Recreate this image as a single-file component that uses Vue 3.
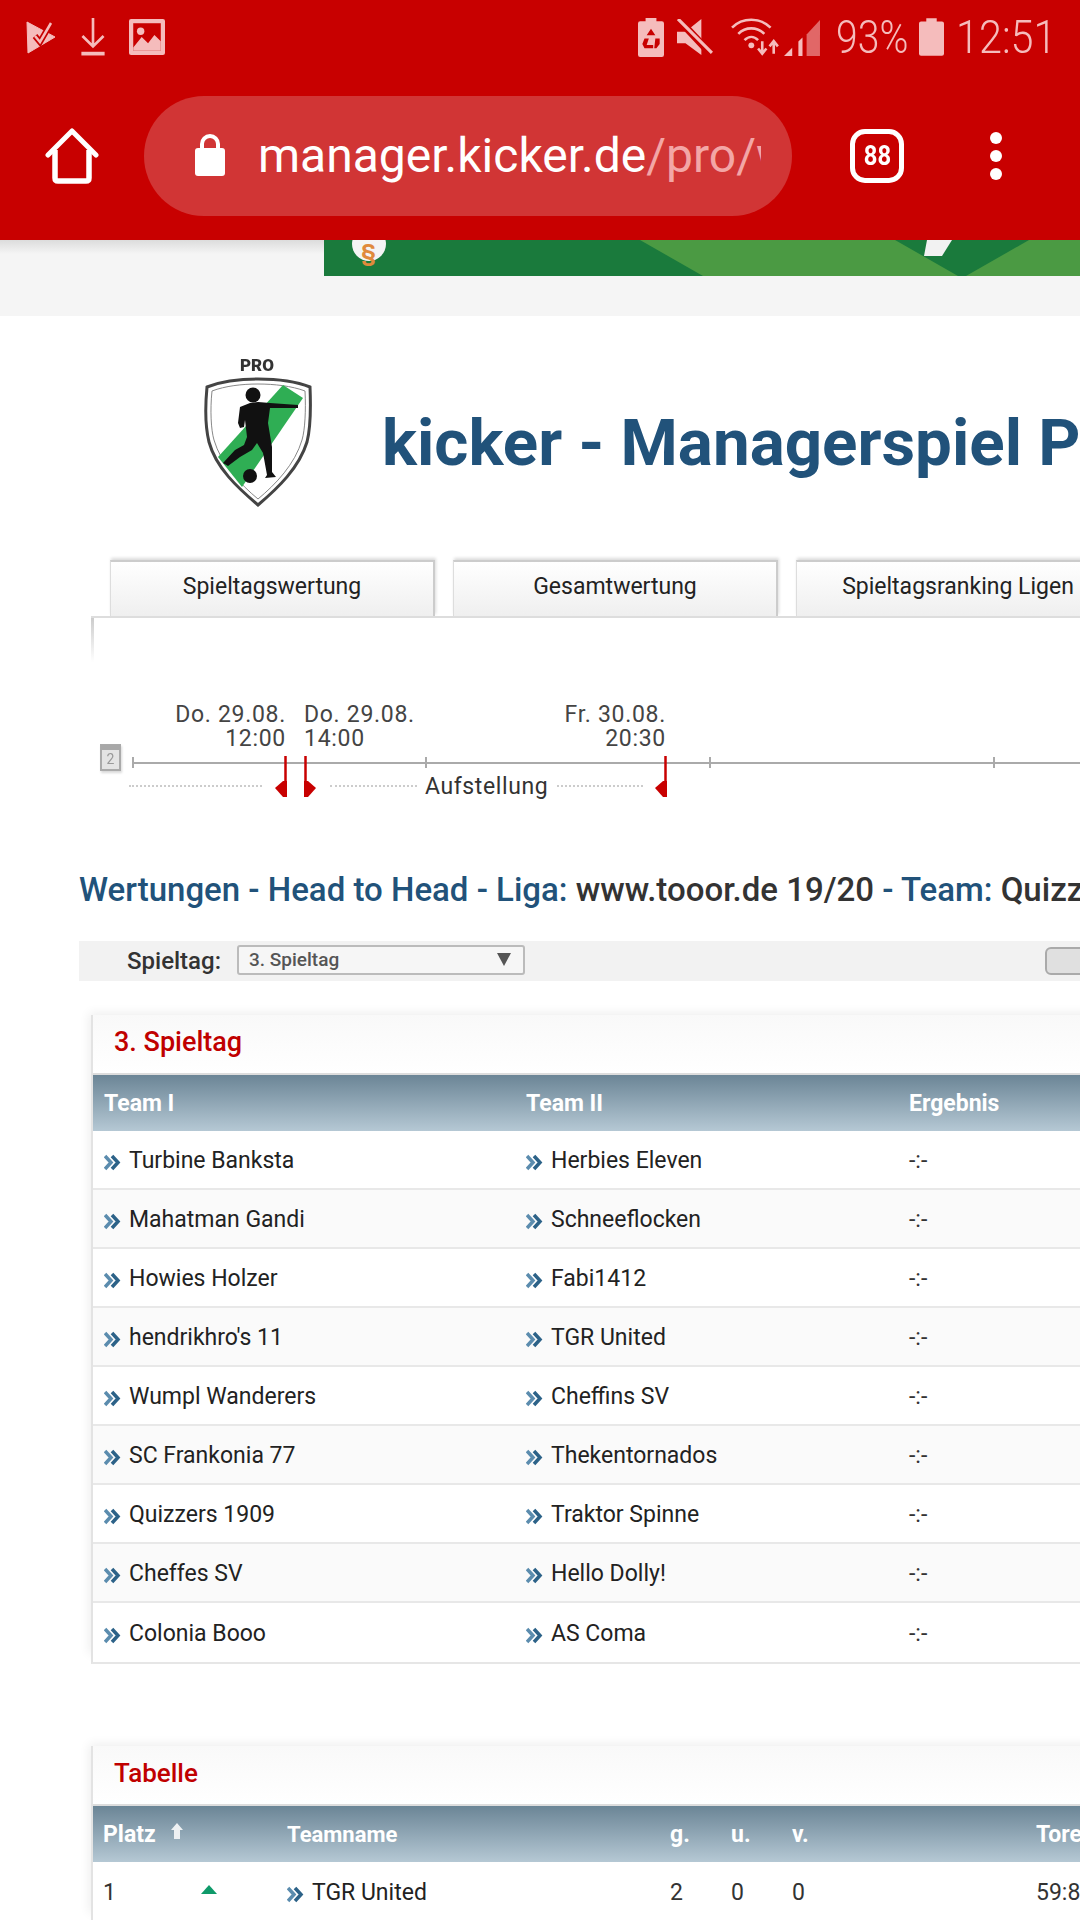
<template>
  <div class="screen">
    <header class="browser">
      <div class="status">
        <div class="status-left">
          <svg class="ic-play" width="30" height="34" viewBox="0 0 30 34">
            <path d="M1 2 L29 17 L2 33 Z" fill="#f5bcbc" stroke="#f5bcbc" stroke-linejoin="round" stroke-width="1" />
            <path d="M9 16 L14 22 L25 3" fill="none" stroke="#c80000" stroke-width="6" />
            <path d="M9 16 L14 22 L25 3" fill="none" stroke="#f5bcbc" stroke-width="2.5" />
          </svg>
          <svg class="ic-down" width="26" height="38" viewBox="0 0 24 36">
            <path d="M12 0 V27 M2 17 L12 27 L22 17" fill="none" stroke="#f5bcbc" stroke-width="2.5" />
            <rect x="1" y="32" width="22" height="3.5" fill="#f5bcbc" />
          </svg>
          <svg class="ic-image" width="36" height="36" viewBox="0 0 34 34">
            <rect width="34" height="34" rx="2" fill="#f5bcbc" />
            <rect x="4" y="4" width="26" height="26" fill="#c80000" />
            <circle cx="11" cy="11.500" r="3.500" fill="#f5bcbc" />
            <path d="M4 27 L12 17 L18 23 L24 15 L30 21 V30 H4 Z" fill="#f5bcbc" />
          </svg>
        </div>
        <div class="status-right">
          <svg class="ic-batsave" width="26" height="39" viewBox="0 0 24 36">
            <path d="M7 0 H17 V3 H22 Q24 3 24 5 V34 Q24 36 22 36 H2 Q0 36 0 34 V5 Q0 3 2 3 H7 Z" fill="#f5bcbc" />
            <path d="M12 10 L16 16 H8 Z M6 19 L10 19 L8 25 H14 V28 H6 L4 24 Z M16 19 H20 L20 24 L17 28 H15 Z" fill="#c80000" />
          </svg>
          <svg class="ic-mute" width="36" height="36" viewBox="0 0 34 34">
            <path d="M0 12 H8 L23 0 V34 L8 23 H0 Z" fill="#f5bcbc" />
            <path d="M2 1 L32 33" stroke="#c80000" stroke-width="7" />
            <path d="M1 0 L33 32" stroke="#f5bcbc" stroke-width="3" />
          </svg>
          <svg class="ic-wifi" width="50" height="38" viewBox="0 0 48 36">
            <path d="M1 9 C11 -1 28 -1 38 9 M7 15 C14 8 25 8 32 15 M13 21 C17 17 22 17 26 21" fill="none" stroke="#f5bcbc" stroke-width="2.500" />
            <circle cx="19.500" cy="26" r="2.800" fill="#f5bcbc" />
            <path d="M30 22 V33 M26 29 L30 34 L34 29 M41 34 V23 M37 27 L41 22 L45 27" fill="none" stroke="#f5bcbc" stroke-width="2.500" />
          </svg>
          <svg class="ic-signal" width="37" height="37" viewBox="0 0 36 36">
            <path d="M0 36 L8 28 V36 Z M14 22 L18 18 V36 H14 Z" fill="#f5bcbc" />
            <path d="M22 15 L35 1 V36 H22 Z" fill="#f5bcbc" opacity=".55" />
          </svg>
          <span class="pct">93%</span>
          <svg class="ic-bat" width="25" height="38" viewBox="0 0 24 36">
            <path d="M7 0 H17 V3 H22 Q24 3 24 5 V34 Q24 36 22 36 H2 Q0 36 0 34 V5 Q0 3 2 3 H7 Z" fill="#f5bcbc" />
          </svg>
          <span class="clock">12:51</span>
        </div>
      </div>
      <div class="toolbar">
        <svg class="ic-home" width="54" height="56" viewBox="0 0 54 56">
          <path d="M3 27 L27 3 L51 27" fill="none" stroke="#fff" stroke-width="5" stroke-linecap="round" stroke-linejoin="round" />
          <path d="M10 22 V50 Q10 53 13 53 H41 Q44 53 44 50 V22" fill="none" stroke="#fff" stroke-width="5.500" />
        </svg>
        <div class="omnibox">
          <svg class="ic-lock" width="32" height="44" viewBox="0 0 32 44">
            <path d="M8 18 V11 A8 8 0 0 1 24 11 V18" fill="none" stroke="#fff" stroke-width="4" />
            <rect x="1" y="15" width="30" height="28" rx="3" fill="#fff" />
          </svg>
          <div class="url"><span class="host">manager.kicker.de</span><span class="path">/pro/wertungen</span></div>
        </div>
        <div class="tabcount"><span>88</span></div>
        <div class="menu"><i></i><i></i><i></i></div>
      </div>
    </header>

    <div class="adzone">
      <svg class="ad" width="756" height="36" viewBox="0 0 756 36">
        <rect width="756" height="36" fill="#1a7a3c" />
        <path d="M316 0 L379 36 H571 L571 0 Z" fill="#4b9a43" />
        <path d="M571 0 L634 36 H571 Z" fill="#4b9a43" />
        <path d="M642 36 L705 0 H756 V36 Z" fill="#4b9a43" />
        <path d="M603 0 H628 L618 16 H600 Z" fill="#f2f2f2" />
        <circle cx="45" cy="4" r="17" fill="#f4f4f4" />
      </svg>
      <span class="para">§</span>
    </div>

    <div class="brand">
      <svg class="logo" width="120" height="160" viewBox="30 10 120 160">
        <text x="87" y="31" text-anchor="middle" class="logo-pro">PRO</text>
        <path d="M88 39 C104 39 125 41 140 47 C141 70 140 90 137 102 C129 128 108 148 88 165 C68 148 46 128 39 102 C36 90 35 68 37 47 C52 41 72 39 88 39 Z" fill="#fff" stroke="#444" stroke-width="3" />
        <path d="M88 44 C104 44 122 46 135 51 C136 70 135 90 132 100 C125 124 106 144 88 159 C70 144 51 124 44 100 C41 90 40 70 42 51 C55 46 72 44 88 44 Z" fill="#fff" stroke="#888" stroke-width="1" />
        <path d="M113 45 L133 58 L72 147 L48 117 Z" fill="#2fae54" />
        <circle cx="83" cy="55" r="7.500" fill="#111" />
        <path d="M80 63 L70 67 L68 83 L70 88 L74 87 L75 80 L77 97 L74 105 L65 110 L53 123 L58 126 L70 117 L82 110 L87 103 L93 113 L97 135 L95 138 L106 137 L102 132 L102 107 L98 83 L100 68 L128 68 L128 65 L100 63 L88 62 Z" fill="#111" />
        <circle cx="80" cy="136" r="7" fill="#111" />
      </svg>
      <h1 class="brand-title">kicker - Managerspiel Pro</h1>
    </div>

    <nav class="tabs">
      <div v-for="t in tabs" :key="t" class="tab">{{ t }}</div>
    </nav>

    <section class="panel">
      <div class="timeline">
        <svg class="calendar" width="22" height="30" viewBox="0 0 22 30">
          <rect x="1" y="1" width="19" height="25" fill="#e4e4e4" stroke="#aaa" stroke-width="2" />
          <rect x="1" y="1" width="19" height="5" fill="#a8a8a8" />
          <text x="10.500" y="20" text-anchor="middle" class="cal-num">2</text>
        </svg>
        <div class="axis"></div>
        <i v-for="x in ticks" :key="x" class="tick" :style="{ left: x + 'px' }"></i>
        <div
          v-for="m in markers"
          :key="m.x"
          class="marker"
          :class="m.dir"
          :style="{ left: m.x + 'px' }"
        >
          <div class="marker-label">{{ m.date }}<br />{{ m.time }}</div>
          <svg class="flag" width="14" height="42" viewBox="0 0 14 42">
            <template v-if="m.dir === 'left'">
              <path d="M11.500 0 V40" stroke="#c80000" stroke-width="2.500" />
              <path d="M13 25 V41 L9 41 L1 32 L9 25 Z" fill="#c80000" />
            </template>
            <template v-else>
              <path d="M2.500 0 V40" stroke="#c80000" stroke-width="2.500" />
              <path d="M1 25 V41 L5 41 L13 32 L5 25 Z" fill="#c80000" />
            </template>
          </svg>
        </div>
        <i class="dots d1"></i>
        <i class="dots d2"></i>
        <i class="dots d3"></i>
        <span class="lineup">Aufstellung</span>
      </div>

      <h2 class="crumbs">
        Wertungen - Head to Head - Liga: <b>www.tooor.de 19/20</b> - Team: <b>Quizzers 1909</b>
      </h2>

      <div class="filter">
        <label class="filter-label">Spieltag:</label>
        <div class="select">
          <span>3. Spieltag</span>
          <i class="select-arrow"></i>
        </div>
        <div class="filter-btn"></div>
      </div>

      <div class="card card-matches">
        <div class="card-title">3. Spieltag</div>
        <div class="thead match-grid">
          <span>Team I</span>
          <span>Team II</span>
          <span>Ergebnis</span>
        </div>
        <div v-for="(m, i) in matches" :key="m[0]" class="row match-grid" :class="{ alt: i % 2 }">
          <span class="team">
            <svg class="chev" width="17" height="17" viewBox="0 0 17 17">
              <path d="M1 2 L7 8.500 L1 15" fill="none" stroke="#5b8cae" stroke-width="3.500" />
              <path d="M8 2 L14 8.500 L8 15" fill="none" stroke="#2c6288" stroke-width="3.500" />
            </svg>{{ m[0] }}
          </span>
          <span class="team">
            <svg class="chev" width="17" height="17" viewBox="0 0 17 17">
              <path d="M1 2 L7 8.500 L1 15" fill="none" stroke="#5b8cae" stroke-width="3.500" />
              <path d="M8 2 L14 8.500 L8 15" fill="none" stroke="#2c6288" stroke-width="3.500" />
            </svg>{{ m[1] }}
          </span>
          <span class="score">-:-</span>
        </div>
      </div>

      <div class="card card-table">
        <div class="card-title">Tabelle</div>
        <div class="thead table-grid">
          <span class="platz">Platz
            <svg class="sort" width="14" height="18" viewBox="0 0 14 18">
              <path d="M7 1 L13 8 H10 V17 H4 V8 H1 Z" fill="#eef1f3" />
            </svg>
          </span>
          <span class="teamname">Teamname</span>
          <span>g.</span>
          <span>u.</span>
          <span>v.</span>
          <span class="tore">Tore</span>
        </div>
        <div class="row table-grid">
          <span class="rank">1<i class="trend"></i></span>
          <span class="team">
            <svg class="chev" width="17" height="17" viewBox="0 0 17 17">
              <path d="M1 2 L7 8.500 L1 15" fill="none" stroke="#5b8cae" stroke-width="3.500" />
              <path d="M8 2 L14 8.500 L8 15" fill="none" stroke="#2c6288" stroke-width="3.500" />
            </svg>TGR United
          </span>
          <span>2</span>
          <span>0</span>
          <span>0</span>
          <span class="tore">59:8</span>
        </div>
      </div>
    </section>
  </div>
</template>

<script setup>
const tabs = ['Spieltagswertung', 'Gesamtwertung', 'Spieltagsranking Ligen']

const ticks = [132, 425, 709, 993]

const markers = [
  { x: 286, dir: 'left', date: 'Do. 29.08.', time: '12:00' },
  { x: 304, dir: 'right', date: 'Do. 29.08.', time: '14:00' },
  { x: 666, dir: 'left', date: 'Fr. 30.08.', time: '20:30' }
]

const matches = [
  ['Turbine Banksta', 'Herbies Eleven'],
  ['Mahatman Gandi', 'Schneeflocken'],
  ['Howies Holzer', 'Fabi1412'],
  ["hendrikhro's 11", 'TGR United'],
  ['Wumpl Wanderers', 'Cheffins SV'],
  ['SC Frankonia 77', 'Thekentornados'],
  ['Quizzers 1909', 'Traktor Spinne'],
  ['Cheffes SV', 'Hello Dolly!'],
  ['Colonia Booo', 'AS Coma']
]
</script>

<style>
html,
body {
  margin: 0;
  background: #fff;
}
</style>

<style scoped>
.screen {
  width: 1080px;
  height: 1920px;
  overflow: hidden;
  background: #fff;
  font-family: Roboto, "Liberation Sans", sans-serif;
  color: #222;
}

.browser {
  height: 240px;
  background: #c80000;
  display: flex;
  flex-direction: column;
}

.status {
  height: 96px;
  padding: 0 28px 22px 26px;
  box-sizing: border-box;
  display: flex;
  align-items: center;
  justify-content: space-between;
}

.status-left,
.status-right {
  display: flex;
  align-items: center;
}

.ic-down {
  margin-left: 24px;
}

.ic-image {
  margin-left: 23px;
}

.ic-mute {
  margin-left: 13px;
}

.ic-wifi {
  margin-left: 18px;
}

.ic-signal {
  margin-left: 3px;
}

.pct,
.clock {
  font-size: 46px;
  font-weight: 300;
  color: #f5bcbc;
  line-height: 40px;
  display: inline-block;
  transform-origin: left center;
  white-space: nowrap;
}

.pct {
  width: 70px;
  margin-left: 15px;
  transform: scaleX(0.85);
}

.ic-bat {
  margin-left: 13px;
}

.clock {
  width: 96px;
  margin-left: 12px;
  transform: scaleX(0.9);
}

.toolbar {
  height: 120px;
  display: flex;
  align-items: center;
  padding-left: 45px;
}

.ic-home {
  flex-shrink: 0;
}

.omnibox {
  width: 648px;
  height: 120px;
  margin-left: 45px;
  border-radius: 60px;
  background: #d13535;
  display: flex;
  align-items: center;
  padding-left: 50px;
  box-sizing: border-box;
  flex-shrink: 0;
}

.ic-lock {
  flex-shrink: 0;
  margin-top: -2px;
}

.url {
  width: 503px;
  margin-left: 32px;
  overflow: hidden;
  white-space: nowrap;
  font-size: 48px;
  line-height: 60px;
}

.host {
  color: #fff;
}

.path {
  color: #f3a6a6;
}

.tabcount {
  width: 54px;
  height: 54px;
  margin-left: 58px;
  border: 5px solid #fff;
  border-radius: 15px;
  box-sizing: border-box;
  display: flex;
  align-items: center;
  justify-content: center;
  flex-shrink: 0;
  color: #fff;
  font-size: 27px;
  font-weight: 700;
}

.tabcount span {
  display: inline-block;
  transform: scaleX(0.88);
}

.menu {
  margin-left: 86px;
  display: flex;
  flex-direction: column;
  gap: 6px;
}

.menu i {
  display: block;
  width: 12px;
  height: 12px;
  border-radius: 50%;
  background: #fff;
}

.adzone {
  height: 76px;
  position: relative;
  background: linear-gradient(#dcdcdc 0, #f5f5f5 14px);
  padding-left: 324px;
}

.ad {
  display: block;
}

.para {
  position: absolute;
  left: 361px;
  top: 0;
  font-size: 24px;
  line-height: 26px;
  font-weight: 700;
  color: #e08a3c;
}

.brand {
  height: 244px;
  padding-left: 200px;
  box-sizing: border-box;
  display: flex;
  align-items: flex-start;
  white-space: nowrap;
}

.logo {
  margin-top: 34px;
  flex-shrink: 0;
  filter: blur(0.5px);
}

.logo-pro {
  font-size: 17px;
  font-weight: 900;
  fill: #333;
}

.brand-title {
  margin: 89px 0 0 62px;
  font-size: 65.500px;
  line-height: 76px;
  font-weight: 700;
  color: #21527a;
}

.tabs {
  display: flex;
  gap: 18px;
  padding-left: 110px;
  height: 56px;
  white-space: nowrap;
}

.tab {
  width: 325px;
  flex-shrink: 0;
  box-sizing: border-box;
  border-top: 2px solid #ccc;
  border-right: 2px solid #ccc;
  border-left: 1px solid #ddd;
  box-shadow: 1px -2px 3px rgba(0, 0, 0, 0.14);
  background: linear-gradient(#fff, #efefef);
  text-align: center;
  font-size: 23px;
  line-height: 50px;
  color: #222;
}

.panel {
  position: relative;
  margin-left: 91px;
  width: 1400px;
  border-top: 2px solid #ddd;
  background: #fff;
}

.panel::before {
  content: '';
  position: absolute;
  left: 0;
  top: 0;
  width: 3px;
  height: 44px;
  background: linear-gradient(#ccc, #fff);
}

.timeline {
  height: 252px;
  position: relative;
  margin-left: -91px;
}

.calendar {
  position: absolute;
  left: 100px;
  top: 126px;
  filter: drop-shadow(1px 2px 1px rgba(0, 0, 0, 0.15));
}

.cal-num {
  font-size: 14px;
  fill: #999;
}

.axis {
  position: absolute;
  left: 132px;
  right: 0;
  top: 144px;
  height: 2px;
  background: #aaa;
}

.tick {
  position: absolute;
  top: 139px;
  width: 2px;
  height: 11px;
  background: #aaa;
}

.marker {
  position: absolute;
  top: 85px;
  width: 0;
}

.marker-label {
  position: absolute;
  top: 0;
  white-space: nowrap;
  font-size: 23px;
  line-height: 24px;
  letter-spacing: 0.7px;
  color: #444;
}

.marker.left .marker-label {
  right: 0;
  text-align: right;
}

.marker.right .marker-label {
  left: 0;
}

.flag {
  position: absolute;
  top: 53px;
}

.marker.left .flag {
  left: -12px;
}

.marker.right .flag {
  left: -1px;
}

.dots {
  position: absolute;
  top: 167px;
  height: 0;
  border-top: 2px dotted #ccc;
}

.d1 {
  left: 129px;
  width: 133px;
}

.d2 {
  left: 330px;
  width: 87px;
}

.d3 {
  left: 557px;
  width: 86px;
}

.lineup {
  position: absolute;
  left: 425px;
  top: 155px;
  font-size: 23px;
  line-height: 28px;
  letter-spacing: 0.6px;
  color: #333;
}

.crumbs {
  margin: 0 0 0 -12px;
  height: 71px;
  font-size: 33px;
  line-height: 40px;
  font-weight: 500;
  color: #21527a;
  white-space: nowrap;
}

.crumbs b {
  font-weight: 500;
  color: #333;
}

.filter {
  margin-left: -12px;
  height: 40px;
  background: #f2f2f2;
  display: flex;
  align-items: center;
  padding-left: 48px;
}

.filter-label {
  width: 110px;
  font-size: 24px;
  font-weight: 500;
  color: #333;
}

.select {
  width: 288px;
  height: 30px;
  box-sizing: border-box;
  border: 2px solid #bbb;
  border-radius: 3px;
  background: #f6f6f6;
  display: flex;
  align-items: center;
  justify-content: space-between;
  padding: 0 12px 0 10px;
  font-size: 19px;
  font-weight: 500;
  color: #555;
  margin-top: -3px;
}

.select-arrow {
  width: 0;
  height: 0;
  border-left: 7px solid transparent;
  border-right: 7px solid transparent;
  border-top: 13px solid #555;
}

.filter-btn {
  width: 120px;
  height: 28px;
  margin-left: 520px;
  box-sizing: border-box;
  border: 2px solid #aaa;
  border-radius: 6px;
  background: #e0e0e0;
}

.card {
  box-sizing: border-box;
  width: 1300px;
  border-left: 2px solid #e3e3e3;
  border-bottom: 2px solid #e6e6e6;
  box-shadow: -6px -6px 10px -4px rgba(0, 0, 0, 0.07);
}

.card-matches {
  margin-top: 34px;
}

.card-table {
  margin-top: 82px;
}

.card-title {
  height: 60px;
  box-sizing: border-box;
  padding-left: 21px;
  border-bottom: 2px solid #ddd;
  background: linear-gradient(#f9f9f9, #fff);
  color: #c00000;
  font-size: 27px;
  font-weight: 500;
  line-height: 55px;
}

.card-table .card-title {
  font-size: 26px;
}

.thead {
  height: 56px;
  background: linear-gradient(#6b8596, #b5c8d4);
  color: #fff;
  font-size: 23px;
  font-weight: 700;
  align-items: center;
}

.teamname {
  font-size: 22px;
}

.match-grid {
  display: grid;
  grid-template-columns: 422px 383px 1fr;
  padding-left: 11px;
  align-items: center;
}

.table-grid {
  display: grid;
  grid-template-columns: 184px 383px 61px 61px 244px 1fr;
  padding-left: 10px;
  align-items: center;
}

.row {
  height: 59px;
  box-sizing: border-box;
  padding-top: 2px;
  border-bottom: 2px solid #e8e8e8;
  background: #fff;
  font-size: 23px;
  color: #222;
}

.row.alt {
  background: #fafafa;
}

.card-table .row {
  border-bottom: 0;
  color: #333;
}

.card-matches .row:last-child {
  border-bottom: 0;
}

.team {
  display: flex;
  align-items: center;
  color: #222;
}

.chev {
  margin: 3px 8px 0 0;
  flex-shrink: 0;
}

.score {
  color: #333;
}

.platz {
  display: flex;
  align-items: center;
  gap: 14px;
}

.sort {
  margin-top: -6px;
}

.rank {
  position: relative;
}

.trend {
  position: absolute;
  left: 98px;
  top: 6px;
  width: 0;
  height: 0;
  border-left: 8px solid transparent;
  border-right: 8px solid transparent;
  border-bottom: 9px solid #0f9a6a;
}
</style>
